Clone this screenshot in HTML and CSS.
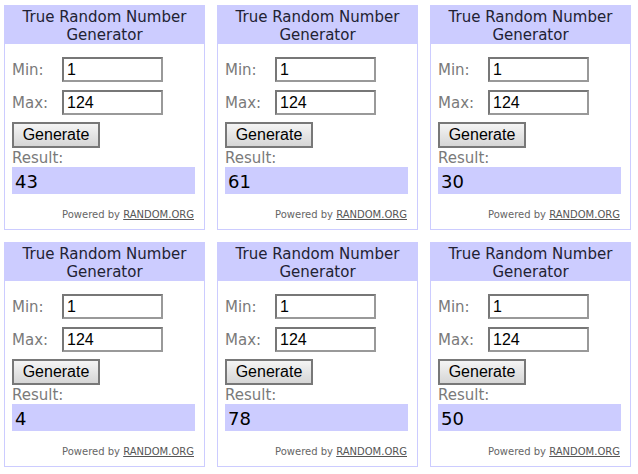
FILE: index.html
```html
<!DOCTYPE html>
<html lang="en">
<head>
  <meta charset="UTF-8">
  <title>True Random Number Generator</title>
  <link rel="stylesheet" href="styles.css">
</head>
<body>

  <div class="grid">
    <div class="widget">
      <div class="head">True Random Number<br>Generator</div>
      <div class="body">
        <div class="row"><span class="label">Min:</span><input type="text" value="1"></div>
        <div class="row"><span class="label">Max:</span><input type="text" value="124"></div>
        <button>Generate</button>
        <div class="label result-label">Result:</div>
        <div class="result">43</div>
        <div class="powered">Powered by <u>RANDOM.ORG</u></div>
      </div>
    </div>

    <div class="widget">
      <div class="head">True Random Number<br>Generator</div>
      <div class="body">
        <div class="row"><span class="label">Min:</span><input type="text" value="1"></div>
        <div class="row"><span class="label">Max:</span><input type="text" value="124"></div>
        <button>Generate</button>
        <div class="label result-label">Result:</div>
        <div class="result">61</div>
        <div class="powered">Powered by <u>RANDOM.ORG</u></div>
      </div>
    </div>

    <div class="widget">
      <div class="head">True Random Number<br>Generator</div>
      <div class="body">
        <div class="row"><span class="label">Min:</span><input type="text" value="1"></div>
        <div class="row"><span class="label">Max:</span><input type="text" value="124"></div>
        <button>Generate</button>
        <div class="label result-label">Result:</div>
        <div class="result">30</div>
        <div class="powered">Powered by <u>RANDOM.ORG</u></div>
      </div>
    </div>

    <div class="widget">
      <div class="head">True Random Number<br>Generator</div>
      <div class="body">
        <div class="row"><span class="label">Min:</span><input type="text" value="1"></div>
        <div class="row"><span class="label">Max:</span><input type="text" value="124"></div>
        <button>Generate</button>
        <div class="label result-label">Result:</div>
        <div class="result">4</div>
        <div class="powered">Powered by <u>RANDOM.ORG</u></div>
      </div>
    </div>

    <div class="widget">
      <div class="head">True Random Number<br>Generator</div>
      <div class="body">
        <div class="row"><span class="label">Min:</span><input type="text" value="1"></div>
        <div class="row"><span class="label">Max:</span><input type="text" value="124"></div>
        <button>Generate</button>
        <div class="label result-label">Result:</div>
        <div class="result">78</div>
        <div class="powered">Powered by <u>RANDOM.ORG</u></div>
      </div>
    </div>

    <div class="widget">
      <div class="head">True Random Number<br>Generator</div>
      <div class="body">
        <div class="row"><span class="label">Min:</span><input type="text" value="1"></div>
        <div class="row"><span class="label">Max:</span><input type="text" value="124"></div>
        <button>Generate</button>
        <div class="label result-label">Result:</div>
        <div class="result">50</div>
        <div class="powered">Powered by <u>RANDOM.ORG</u></div>
      </div>
    </div>
  </div>

</body>
</html>
```

FILE: styles.css
```css
body {
  margin: 0;
  padding: 5px 0 0 4px;
  background: #fff;
  font-family: "DejaVu Sans", Verdana, sans-serif;
}

.grid {
  display: grid;
  grid-template-columns: repeat(3, 201px);
  grid-auto-rows: 225px;
  column-gap: 12px;
  row-gap: 12px;
}

.widget {
  box-sizing: border-box;
  border: 1px solid #ccccff;
  background: #fff;
}

.head {
  height: 39px;
  box-sizing: border-box;
  padding-top: 3px;
  margin: -1px -1px 0 -1px;
  background: #ccccff;
  color: #222233;
  font-size: 15px;
  line-height: 18px;
  text-align: center;
}

.body {
  padding: 0 8px 0 7px;
}

.row {
  display: flex;
  align-items: center;
  margin-top: 13px;
}

.row + .row {
  margin-top: 8px;
}

.label {
  width: 50px;
  color: #7a7a7a;
  font-size: 15px;
}

input {
  box-sizing: border-box;
  width: 101px;
  height: 25px;
  margin: 0;
  padding: 0 3px;
  border: 2px solid #777;
  border-right-color: #999;
  border-bottom-color: #999;
  font-family: "Liberation Sans", Arial, sans-serif;
  font-size: 16px;
  color: #000;
}

button {
  display: block;
  box-sizing: border-box;
  width: 88px;
  height: 26px;
  margin-top: 7px;
  padding: 0;
  border: 2px solid #787878;
  background: linear-gradient(#f4f4f4, #d6d6d6);
  font-family: "Liberation Sans", Arial, sans-serif;
  font-size: 16px;
  color: #000;
}

.result-label {
  width: auto;
  line-height: 18px;
  margin-top: 1px;
}

.result {
  height: 27px;
  margin-right: 1px;
  padding-left: 3px;
  background: #ccccff;
  color: #000;
  font-size: 18px;
  line-height: 29px;
}

.powered {
  margin: 15px 2px 0 0;
  text-align: right;
  color: #666;
  font-size: 10px;
  line-height: 12px;
}

.powered u {
  color: #555;
}
```
